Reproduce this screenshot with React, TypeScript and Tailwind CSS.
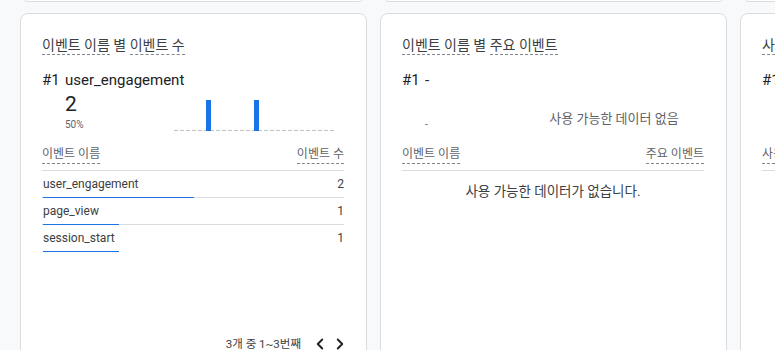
import React from "react";
import { ChevronLeft, ChevronRight } from "lucide-react";

const ROWS = [
  { name: "user_engagement", count: 2 },
  { name: "page_view", count: 1 },
  { name: "session_start", count: 1 },
];
const TOTAL = 4;

function Dashed({ children }: { children: React.ReactNode }) {
  return <span className="border-b border-dashed border-[#80868b] pb-[1px]">{children}</span>;
}

function Chart() {
  return (
    <svg width="160" height="31" viewBox="0 0 160 31" className="block">
      <line x1="0" y1="30.5" x2="160" y2="30.5" stroke="#bdc1c6" strokeWidth="1" strokeDasharray="4 2" />
      <rect x="32" y="0" width="5" height="31" fill="#1a73e8" />
      <rect x="80" y="0" width="5" height="31" fill="#1a73e8" />
    </svg>
  );
}

function Card({ children }: { children: React.ReactNode }) {
  return (
    <div className="w-[347px] shrink-0 h-[360px] bg-white border border-[#dadce0] rounded-[8px] pt-[21px] pl-[21px] pr-[22px] flex flex-col">
      {children}
    </div>
  );
}

export default function App() {
  return (
    <div className="w-[775px] h-[350px] overflow-hidden bg-[#f8f9fa] font-['Roboto','Noto_Sans_CJK_KR',sans-serif]">
      {/* bottoms of the cards above */}
      <div className="flex gap-[20px] pl-[23px]">
        <div className="w-[341px] shrink-0 h-[10px] -mt-[8px] bg-white border border-[#dadce0] rounded-[8px]" />
        <div className="w-[340px] shrink-0 h-[10px] -mt-[8px] bg-white border border-[#dadce0] rounded-[8px]" />
        <div className="w-[340px] shrink-0 h-[10px] -mt-[8px] bg-white border border-[#dadce0] rounded-[8px]" />
      </div>

      <div className="flex gap-[13px] pl-[20px] mt-[11px]">
        {/* Card 1 */}
        <Card>
          <div className="text-[14px] leading-[20px] text-[#3c4043] whitespace-nowrap">
            <Dashed>이벤트 이름</Dashed> 별 <Dashed>이벤트 수</Dashed>
          </div>

          <div className="mt-[15px] flex text-[15px] leading-[20px] text-[#202124]">
            <span className="w-[23px]">#1</span>
            <span>user_engagement</span>
          </div>

          <div className="flex items-end pl-[23px] mt-[2px]">
            <div className="w-[109px]">
              <div className="text-[21px] leading-[24px] text-[#202124]">2</div>
              <div className="mt-[2px] text-[10px] leading-[14px] text-[#5f6368]">50%</div>
            </div>
            <div className="mb-[1px]">
              <Chart />
            </div>
          </div>

          <div className="mt-[14px] h-[25px] flex justify-between items-start border-b border-[#dadce0] text-[12px] leading-[16px] text-[#5f6368]">
            <Dashed>이벤트 이름</Dashed>
            <Dashed>이벤트 수</Dashed>
          </div>

          {ROWS.map((r, i) => (
            <div key={r.name} className="h-[27px] flex flex-col">
              <div className="flex-1 flex justify-between items-center pl-[1px] text-[12px] leading-[16px] text-[#3c4043]">
                <span>{r.name}</span>
                <span>{r.count}</span>
              </div>
              <div className={i < ROWS.length - 1 ? "h-[1px] bg-[#dadce0]" : "h-[1px]"}>
                <div className="h-[1px] bg-[#1a73e8] ml-[1px]" style={{ width: `${(r.count / TOTAL) * 100}%` }} />
              </div>
            </div>
          ))}

          <div className="mt-[83px] flex items-center justify-end -mr-[5px] text-[11.5px] leading-[16px] text-[#3c4043]">
            <span className="mr-[10px]">3개 중 1~3번째</span>
            <ChevronLeft size={18} strokeWidth={2.5} className="text-[#202124]" />
            <ChevronRight size={18} strokeWidth={2.5} className="text-[#202124] ml-[2px]" />
          </div>
        </Card>

        {/* Card 2 */}
        <Card>
          <div className="text-[14px] leading-[20px] text-[#3c4043] whitespace-nowrap">
            <Dashed>이벤트 이름</Dashed> 별 <Dashed>주요 이벤트</Dashed>
          </div>

          <div className="mt-[15px] flex text-[15px] leading-[20px] text-[#202124]">
            <span className="w-[23px]">#1</span>
            <span>-</span>
          </div>

          <div className="flex items-end pl-[23px] mt-[2px]">
            <div className="w-[109px]">
              <div className="h-[24px]" />
              <div className="mt-[2px] text-[10px] leading-[14px] text-[#5f6368]">-</div>
            </div>
            <div className="w-[160px] h-[32px] pt-[5px] flex items-center justify-center text-[13px] text-[#5f6368] whitespace-nowrap">
              사용 가능한 데이터 없음
            </div>
          </div>

          <div className="mt-[14px] h-[25px] flex justify-between items-start border-b border-[#dadce0] text-[12px] leading-[16px] text-[#5f6368]">
            <Dashed>이벤트 이름</Dashed>
            <Dashed>주요 이벤트</Dashed>
          </div>

          <div className="mt-[11px] text-center text-[13.5px] leading-[18px] text-[#3c4043]">
            사용 가능한 데이터가 없습니다.
          </div>
        </Card>

        {/* Card 3 */}
        <Card>
          <div className="text-[14px] leading-[20px] text-[#3c4043] whitespace-nowrap">
            <Dashed>사용자</Dashed>
          </div>
          <div className="mt-[15px] flex text-[15px] leading-[20px] text-[#202124]">
            <span className="w-[23px]">#1</span>
          </div>
          <div className="mt-[56px] h-[25px] flex items-start border-b border-[#dadce0] text-[12px] leading-[16px] text-[#5f6368]">
            <Dashed>사용자</Dashed>
          </div>
        </Card>
      </div>
    </div>
  );
}
